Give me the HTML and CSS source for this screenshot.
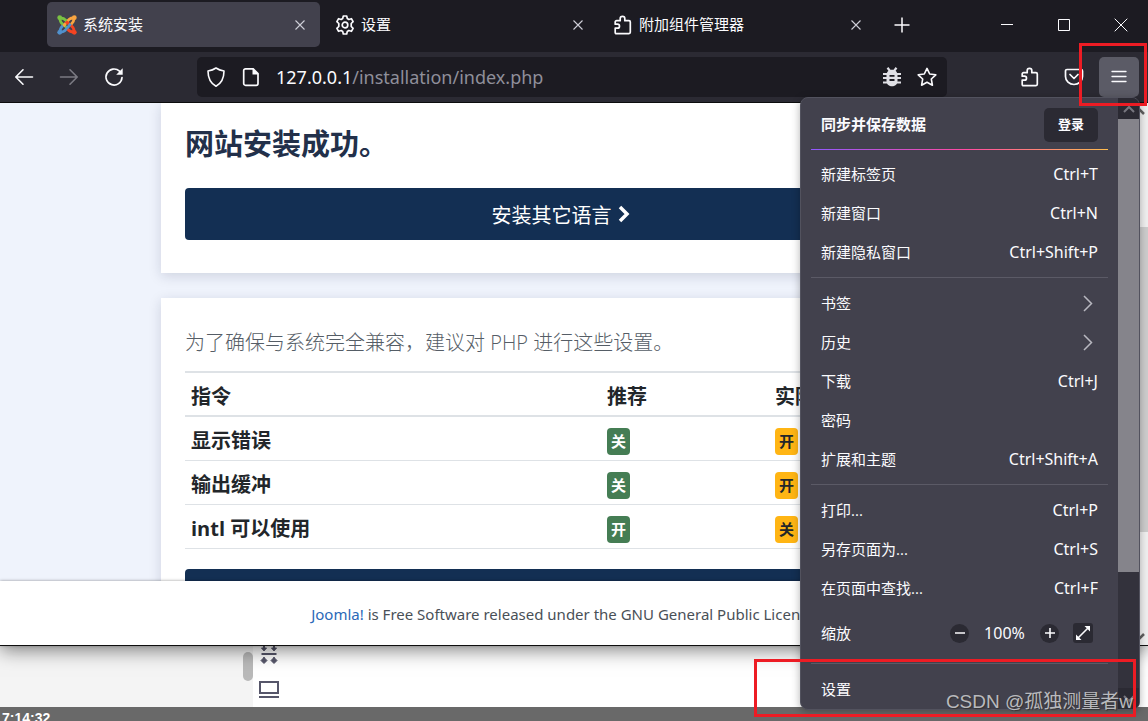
FILE: index.html
```html
<!DOCTYPE html>
<html lang="zh-CN">
<head>
<meta charset="utf-8">
<title>系统安装</title>
<link rel="stylesheet" href="styles.css">
</head>
<body>
<svg class="defs" aria-hidden="true">
  <symbol id="close" viewBox="0 0 12 12"><path d="M1.500 1.500l9 9M10.500 1.500l-9 9" fill="none" stroke="currentColor" stroke-width="1.100"/></symbol>
  <symbol id="puzzle" viewBox="0 0 20 20"><path d="M2.200 17.500V13.200H4.500a2 2 0 0 0 0-4H2.200V7a1.300 1.300 0 0 1 1.300-1.300H7.200V3.600a2.300 2.300 0 0 1 4.600 0V5.700H16A1.300 1.300 0 0 1 17.300 7V17.300A1.300 1.300 0 0 1 16 18.600H3.300A1.100 1.100 0 0 1 2.200 17.500z" fill="none" stroke="currentColor" stroke-width="1.700" stroke-linejoin="round"/></symbol>
</svg>
<div class="desktop">
  <div class="window">
    <header class="tabs">
      <div class="tab active">
        <svg class="icon20" viewBox="0 0 20 20"><g fill="none" stroke-width="2.800" stroke-linejoin="round"><path d="M3 3.500C3 8 5 8.500 11.500 13.800" stroke="#7ac143"/><path d="M16.500 3C12 3 11.500 5 6.300 11.300" stroke="#f9a541"/><path d="M17 16.500C17 12 15 11.500 8.700 6.300" stroke="#f44321"/><path d="M3.500 17C8 17 8.500 15 13.700 8.700" stroke="#5091cd"/><path d="M3.500 3C6 3 7.500 3.800 9.300 5.800" stroke="#7ac143"/><path d="M17 3.500C17 6 16.200 7.500 14.200 9.300" stroke="#f9a541"/><path d="M16.500 17C14 17 12.500 16.200 10.700 14.200" stroke="#f44321"/><path d="M3 16.500C3 14 3.800 12.500 5.800 10.700" stroke="#5091cd"/></g><circle cx="2.700" cy="2.700" r="2.400" fill="#7ac143"/><circle cx="17.300" cy="2.700" r="2.400" fill="#f9a541"/><circle cx="17.300" cy="17.300" r="2.400" fill="#f44321"/><circle cx="2.700" cy="17.300" r="2.400" fill="#5091cd"/></svg>
        <span class="tab-title">系统安装</span>
        <button class="plain" aria-label="关闭标签页"><svg class="icon12"><use href="#close"/></svg></button>
      </div>
      <div class="tab">
        <svg class="icon20" viewBox="0 0 20 20" fill="none" stroke="currentColor" stroke-width="1.700" stroke-linejoin="round"><path d="M8.300 1h3.400l.6 2.600 1.500.9 2.600-.8 1.700 3-1.900 1.800v2.900l1.900 1.900-1.700 3-2.600-.8-1.500.9-.6 2.600H8.300l-.6-2.600-1.500-.9-2.600.8-1.700-3 1.900-1.900V8.500L1.900 6.700l1.700-3 2.600.8 1.500-.9z"/><circle cx="10" cy="10" r="2.800"/></svg>
        <span class="tab-title">设置</span>
        <button class="plain" aria-label="关闭标签页"><svg class="icon12"><use href="#close"/></svg></button>
      </div>
      <div class="tab">
        <svg class="icon20"><use href="#puzzle"/></svg>
        <span class="tab-title">附加组件管理器</span>
        <button class="plain" aria-label="关闭标签页"><svg class="icon12"><use href="#close"/></svg></button>
      </div>
      <button class="plain new-tab" aria-label="新建标签页"><svg class="icon16" viewBox="0 0 16 16"><path d="M8 .5v15M.5 8h15" stroke="currentColor" stroke-width="1.500"/></svg></button>
      <div class="controls">
        <button class="plain" aria-label="最小化"><svg class="icon14" viewBox="0 0 14 14"><path d="M1 6.500h12" stroke="currentColor"/></svg></button>
        <button class="plain" aria-label="最大化"><svg class="icon14" viewBox="0 0 14 14"><path d="M1.500 1.500h11v11h-11z" fill="none" stroke="currentColor"/></svg></button>
        <button class="plain" aria-label="关闭"><svg class="icon14" viewBox="0 0 14 14"><path d="M.7.700l12.600 12.600M13.300.700L.7 13.300" stroke="currentColor"/></svg></button>
      </div>
    </header>

    <nav class="toolbar">
      <div class="nav-buttons">
        <button class="plain" aria-label="后退"><svg class="icon20" viewBox="0 0 20 20" fill="none" stroke="currentColor" stroke-width="1.600" stroke-linecap="round" stroke-linejoin="round"><path d="M18.500 10H2M9 2.800L1.800 10 9 17.200"/></svg></button>
        <button class="plain dim" aria-label="前进"><svg class="icon20" viewBox="0 0 20 20" fill="none" stroke="currentColor" stroke-width="1.600" stroke-linecap="round" stroke-linejoin="round"><path d="M1.500 10H18M11 2.800l7.200 7.200-7.200 7.200"/></svg></button>
        <button class="plain" aria-label="刷新"><svg class="icon20" viewBox="0 0 20 20"><path d="M18 10.500A8 8 0 1 1 15.500 4.200" fill="none" stroke="currentColor" stroke-width="1.700" stroke-linecap="round"/><path d="M18.700 1.300v6.500h-6.500z" fill="currentColor"/></svg></button>
      </div>
      <div class="urlbar">
        <svg class="icon20" viewBox="0 0 20 20"><path d="M10 1c2.500 1.700 5 2.500 8 3 0 7-2 12-8 15.200C4 16 2 11 2 4c3-.5 5.500-1.300 8-3z" fill="none" stroke="currentColor" stroke-width="1.600" stroke-linejoin="round"/></svg>
        <svg class="icon20" viewBox="0 0 20 20"><path d="M4.500 1.800h7.700L17 6.600v9.900a1.800 1.800 0 0 1-1.800 1.800H4.500a1.800 1.800 0 0 1-1.800-1.800V3.600a1.800 1.800 0 0 1 1.800-1.800z" fill="none" stroke="currentColor" stroke-width="1.700"/><path d="M11.500 1.500V7.500h6z" fill="currentColor"/></svg>
        <span class="url"><span class="host">127.0.0.1</span>/installation/index.php</span>
        <svg class="icon20 bug" viewBox="0 0 20 20"><path d="M5.500.8l2.500 3.200M14.500.8L12 4M1 7h18M1 11h18M1 15.500h18" stroke="currentColor" stroke-width="2.200"/><path d="M4.500 8c0-7 11-7 11 0v6c0 7-11 7-11 0z" fill="currentColor"/><path d="M7.500 8.800h5M7.500 13h5" stroke="#1c1b22" stroke-width="1.800"/></svg>
        <svg class="icon20" viewBox="0 0 20 20"><path d="M10 1.400l2.700 5.600 6.100.8-4.500 4.200 1.100 6.200-5.400-3-5.400 3 1.100-6.200L1.200 7.800l6.100-.8z" fill="none" stroke="currentColor" stroke-width="1.600" stroke-linejoin="round"/></svg>
      </div>
      <div class="actions">
        <button class="plain" aria-label="扩展"><svg class="icon20"><use href="#puzzle"/></svg></button>
        <button class="plain" aria-label="Pocket"><svg class="icon20" viewBox="0 0 20 20" fill="none" stroke="currentColor" stroke-width="1.700" stroke-linecap="round" stroke-linejoin="round"><path d="M3 2.500h14a1.500 1.500 0 0 1 1.500 1.500v5.500a8.500 8 0 0 1-17 0V4A1.500 1.500 0 0 1 3 2.500z"/><path d="M6 7.500l4 4 4-4"/></svg></button>
        <button class="plain menu-button" aria-label="打开应用程序菜单"><svg class="icon16" viewBox="0 0 16 16"><path d="M1 2.500h14M1 7.500h14M1 12.500h14" stroke="currentColor" stroke-width="1.300" stroke-linecap="round"/></svg></button>
      </div>
    </nav>

    <div class="viewport">
      <div class="page">
        <main class="content">
          <section class="card first">
            <h1>网站安装成功。</h1>
            <button class="primary">安装其它语言<svg class="chevron" viewBox="0 0 12 18"><path d="M2 2l7 7-7 7" fill="none" stroke="currentColor" stroke-width="3.500"/></svg></button>
          </section>
          <section class="card">
            <p class="lead">为了确保与系统完全兼容，建议对 PHP 进行这些设置。</p>
            <table>
              <thead><tr><th class="c1" scope="col">指令</th><th class="c2" scope="col">推荐</th><th scope="col">实际</th></tr></thead>
              <tbody>
                <tr><th scope="row">显示错误</th><td><span class="badge ok">关</span></td><td><span class="badge warn">开</span></td></tr>
                <tr><th scope="row">输出缓冲</th><td><span class="badge ok">关</span></td><td><span class="badge warn">开</span></td></tr>
                <tr><th scope="row">intl 可以使用</th><td><span class="badge ok">开</span></td><td><span class="badge warn">关</span></td></tr>
              </tbody>
            </table>
            <button class="primary" aria-label="完成"></button>
          </section>
        </main>
        <footer class="footer"><p><a href="#">Joomla!</a> is Free Software released under the GNU General Public License.</p></footer>
      </div>
      <div class="page-scroll">
        <svg class="icon16" viewBox="0 0 16 16"><path d="M3 11l5-5 5 5" fill="none" stroke="currentColor" stroke-width="2.500"/></svg>
        <div class="page-thumb"></div>
        <svg class="icon16" viewBox="0 0 16 16"><path d="M3 5l5 5 5-5" fill="none" stroke="currentColor" stroke-width="2.500"/></svg>
      </div>
    </div>
  </div>

  <div class="behind">
    <div class="behind-body">
      <div class="side"><div class="side-thumb"></div></div>
      <div class="tools">
        <svg class="icon20" viewBox="0 0 20 20" fill="currentColor" stroke="currentColor"><path d="M5 0v3M15 0v3M2.500 8h15" stroke-width="2"/><path d="M2.500 2h5L5 5zM12.500 2h5L15 5z"/><path d="M5 11v4M15 11v4" stroke-width="1.500"/><path d="M5 11.500l3 3-3 3-3-3zM15 11.500l3 3-3 3-3-3z"/></svg>
        <svg class="icon20" viewBox="0 0 20 20" fill="none" stroke="currentColor" stroke-width="2"><path d="M1 2h18v11H1zM0 17h20"/></svg>
      </div>
    </div>
    <div class="status">7:14:32</div>
  </div>

  <aside class="menu">
    <div class="menu-body">
      <div class="sync"><strong>同步并保存数据</strong><button class="login">登录</button></div>
      <div class="rainbow"></div>
      <button class="item"><span>新建标签页</span><span class="key">Ctrl+T</span></button>
      <button class="item"><span>新建窗口</span><span class="key">Ctrl+N</span></button>
      <button class="item"><span>新建隐私窗口</span><span class="key">Ctrl+Shift+P</span></button>
      <hr>
      <button class="item"><span>书签</span><svg class="icon20 arrow" viewBox="0 0 20 20"><path d="M6 3l7.500 7.500L6 18" fill="none" stroke="currentColor" stroke-width="1.500"/></svg></button>
      <button class="item"><span>历史</span><svg class="icon20 arrow" viewBox="0 0 20 20"><path d="M6 3l7.500 7.500L6 18" fill="none" stroke="currentColor" stroke-width="1.500"/></svg></button>
      <button class="item"><span>下载</span><span class="key">Ctrl+J</span></button>
      <button class="item"><span>密码</span></button>
      <button class="item"><span>扩展和主题</span><span class="key">Ctrl+Shift+A</span></button>
      <hr>
      <button class="item"><span>打印...</span><span class="key">Ctrl+P</span></button>
      <button class="item"><span>另存页面为...</span><span class="key">Ctrl+S</span></button>
      <button class="item"><span>在页面中查找...</span><span class="key">Ctrl+F</span></button>
      <div class="zoom">
        <span class="zoom-label">缩放</span>
        <button class="round" aria-label="缩小"><svg class="icon12" viewBox="0 0 12 12"><path d="M1 6h10" stroke="currentColor" stroke-width="1.600"/></svg></button>
        <span class="percent">100%</span>
        <button class="round" aria-label="放大"><svg class="icon12" viewBox="0 0 12 12"><path d="M1 6h10M6 1v10" stroke="currentColor" stroke-width="1.600"/></svg></button>
        <button class="round square" aria-label="全屏"><svg class="icon16" viewBox="0 0 16 16"><path d="M3 13L13 3" stroke="currentColor" stroke-width="1.600"/><path d="M9.500 1H15v5.500zM1 9.500V15h5.500z" fill="currentColor"/></svg></button>
      </div>
      <hr>
      <button class="item"><span>设置</span></button>
    </div>
    <div class="menu-scroll">
      <div class="scroll-arrow"><svg class="icon12" viewBox="0 0 12 12"><path d="M1 9l5-5 5 5" fill="none" stroke="currentColor" stroke-width="2"/></svg></div>
      <div class="menu-thumb"></div>
      <div class="scroll-arrow end"><svg class="icon12" viewBox="0 0 12 12"><path d="M1 3l5 5 5-5" fill="none" stroke="currentColor" stroke-width="2"/></svg></div>
    </div>
  </aside>

  <div class="mark mark-top"></div>
  <div class="mark mark-bottom"></div>
  <div class="watermark">CSDN @孤独测量者w</div>
</div>
</body>
</html>
```
FILE: styles.css
```css
* { box-sizing: border-box; }
body {
  margin: 0;
  font-family: "Open Sans", "Noto Sans CJK SC", sans-serif;
  font-size: 15px;
}
button { font: inherit; color: inherit; border: 0; padding: 0; margin: 0; background: none; }
svg { display: block; flex: none; }
.defs { position: absolute; width: 0; height: 0; }
.icon12 { width: 12px; height: 12px; }
.icon14 { width: 14px; height: 14px; }
.icon16 { width: 16px; height: 16px; }
.icon20 { width: 20px; height: 20px; }
.plain { display: flex; align-items: center; justify-content: center; }

.desktop { position: relative; display: flex; flex-direction: column; height: 100vh; overflow: hidden; }
.window { position: relative; flex: 1; min-height: 0; display: flex; flex-direction: column; border-bottom: 1px solid #111; box-shadow: 0 4px 18px rgba(0, 0, 0, .5); z-index: 1; }

.tabs { display: flex; align-items: center; gap: 5px; height: 52px; padding: 0 20px 3px 47px; background: #1c1b22; color: #fbfbfe; }
.tab { display: flex; align-items: center; gap: 6px; width: 273px; height: 45px; padding: 0 14px 0 10px; border-radius: 5px; }
.tab.active { background: #42414d; }
.tab-title { flex: 1; padding-bottom: 2px; }
.tab .plain { color: #cfcfd8; }
.new-tab { margin-left: 13px; }
.controls { display: flex; gap: 43px; margin-left: auto; }

.toolbar { display: flex; align-items: center; height: 51px; padding: 0 9px 0 14px; background: #2b2a33; color: #fbfbfe; border-bottom: 1px solid #0c0c0d; }
.nav-buttons { display: flex; gap: 25px; width: 183px; }
.dim { color: #7b7a83; }
.urlbar { display: flex; flex: 1; align-items: center; gap: 15px; height: 40px; padding: 0 10px 0 9px; border-radius: 5px; background: #1c1b22; }
.url { flex: 1; font-family: "Noto Sans", sans-serif; font-size: 18px; color: #8f8f9a; }
.host { color: #fbfbfe; }
.bug { color: #e0e0e6; }
.actions { display: flex; align-items: center; gap: 24px; margin-left: 73px; }
.menu-button { width: 40px; height: 40px; border-radius: 5px; background: #5b5b66; margin-left: -9px; }

.viewport { display: flex; flex: 1; min-height: 0; }
.page { display: flex; flex: 1; flex-direction: column; min-width: 0; background: #eff3fc; }
.content { flex: 1; min-height: 0; overflow: hidden; padding: 0 161px; }
.card { margin-bottom: 25px; padding: 24px; background: #fff; box-shadow: 0 3px 12px rgba(20, 30, 60, .15); }
.card.first { padding-bottom: 33px; }
h1 { margin: 0 0 28px; font-size: 29px; line-height: 33px; color: #22304a; }
.primary { display: flex; align-items: center; justify-content: center; gap: 6px; width: 100%; height: 52px; padding-right: 10px; border-radius: 4px; background: #132f53; color: #fff; font-size: 20px; }
.chevron { width: 12px; height: 18px; }
.lead { margin: 7px 0 14px; font-size: 20px; line-height: 28px; font-weight: 300; color: #555d66; }
table { width: 100%; table-layout: fixed; border-collapse: collapse; margin-bottom: 20px; font-size: 20px; color: #22262a; border-top: 2px solid #dee2e6; }
th, td { height: 44px; padding: 6px 6px 0; text-align: left; border-bottom: 1px solid #dee2e6; line-height: 28px; }
thead th { border-bottom-width: 2px; }
.c1 { width: 416px; }
.c2 { width: 168px; }
.badge { display: block; width: 23px; height: 27px; border-radius: 4px; font-size: 15px; line-height: 27px; font-weight: 700; text-align: center; }
.ok { background: #457d54; color: #fff; }
.warn { background: #ffb514; color: #22262a; }
.footer { position: relative; display: flex; align-items: center; justify-content: center; height: 64px; padding-top: 2px; background: #fff; color: #495057; box-shadow: 0 0 3px rgba(0, 0, 0, .4); }
.footer p { margin: 0; white-space: nowrap; font-family: "Noto Sans", sans-serif; font-size: 15px; }
.footer a { color: #2a69b8; text-decoration: none; }
.page-scroll { display: flex; flex-direction: column; width: 17px; background: #f0f0f0; color: #606060; }
.page-thumb { height: 305px; margin: 108px 0 auto; background: #cdcdcd; }

.behind { display: flex; flex-direction: column; height: 75px; }
.behind-body { display: flex; flex: 1; background: #fff; }
.side { display: flex; justify-content: flex-end; width: 253px; background: #f4f4f4; }
.side-thumb { width: 10px; height: 29px; margin-top: 6px; border-radius: 5px; background: #b9b9b9; }
.tools { display: flex; flex-direction: column; gap: 14px; padding-left: 6px; color: #56566a; }
.status { height: 14px; overflow: hidden; padding-left: 2px; background: #696969; color: #fff; font: bold 14px/22px "Liberation Sans", sans-serif; }

.menu { position: absolute; z-index: 2; top: 97px; right: 8px; width: 340px; display: flex; border: 1px solid #52525e; border-radius: 8px; background: #42414d; color: #fbfbfe; overflow: hidden; box-shadow: 0 2px 8px rgba(0, 0, 0, .3); }
.menu-body { flex: 1; padding: 0 10px; }
.sync { display: flex; align-items: center; justify-content: space-between; height: 51px; padding: 2px 10px 0; }
.sync strong { padding-bottom: 2px; font-weight: 700; }
.login { width: 54px; height: 34px; padding-bottom: 2px; border-radius: 5px; background: #2b2a33; font-size: 13px; font-weight: 700; }
.rainbow { height: 1px; margin-bottom: 5px; background: linear-gradient(90deg, #9059ff, #ff4aa2 52%, #ffbd4f); }
.item { display: flex; align-items: center; justify-content: space-between; width: 100%; height: 39px; padding: 0 10px 2px; }
.key, .percent { font-family: "Noto Sans", sans-serif; font-size: 16px; }
.arrow { color: #b8b8c0; }
hr { height: 1px; margin: 5px 0 6px; border: 0; background: #5b5a66; }
.zoom { display: flex; align-items: center; height: 50px; padding: 0 15px 0 10px; }
.zoom-label { flex: 1; padding-bottom: 2px; }
.round { display: flex; align-items: center; justify-content: center; width: 19px; height: 19px; border-radius: 50%; background: #2b2a33; }
.percent { width: 71px; text-align: center; }
.square { width: 20px; height: 20px; margin-left: 14px; border-radius: 3px; }
.menu-scroll { display: flex; flex-direction: column; width: 21px; background: #33323c; }
.scroll-arrow { display: flex; align-items: center; justify-content: center; height: 21px; background: #2b2a33; color: #77767f; }
.menu-thumb { height: 453px; background: #85848b; }
.end { margin-top: auto; }

.mark { position: absolute; z-index: 3; border: 3px solid #ed1c24; }
.mark-top { top: 43px; right: 1px; width: 68px; height: 63px; }
.mark-bottom { bottom: 4px; right: 12px; width: 382px; height: 58px; }
.watermark { position: absolute; z-index: 4; right: 15px; bottom: 5px; font: 19px/28px "Liberation Sans", "Noto Sans CJK SC", sans-serif; color: #b9b9bd; text-shadow: 1px 1px 1px #333; }
```
